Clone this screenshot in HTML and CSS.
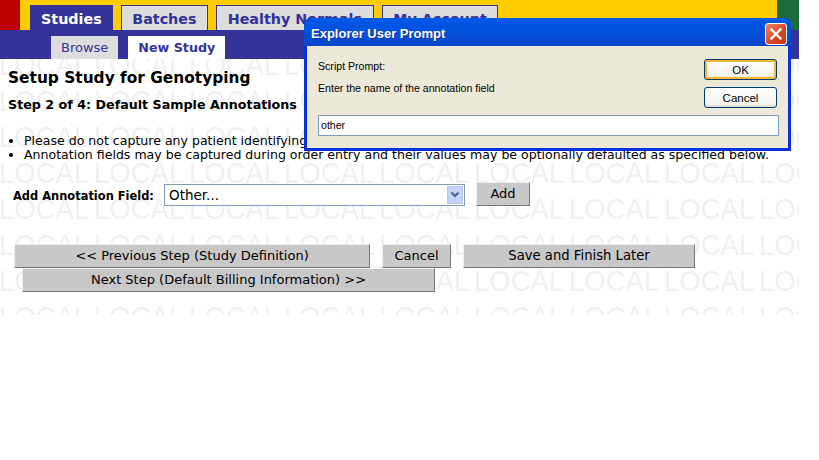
FILE: index.html
```html
<!DOCTYPE html>
<html lang="en">
<head>
    <meta charset="UTF-8">
    <title>Setup Study for Genotyping</title>
    <link rel="stylesheet" href="styles.css">
</head>
<body>
    <div class="page">
        <!-- main tabs -->
        <div class="topBar">
            <div class="redBlock"></div>
            <div class="tabs">
                <a class="tab active">Studies</a>
                <a class="tab">Batches</a>
                <a class="tab">Healthy Normals</a>
                <a class="tab">My Account</a>
            </div>
            <div class="greenBlock"></div>
        </div>
        <div class="subBar">
            <a class="subTab">Browse</a>
            <a class="subTab active">New Study</a>
        </div>

        <div class="content">
            <!-- LOCAL watermark behind the form -->
            <svg class="watermark" width="799" height="256" aria-hidden="true">
                <defs>
                    <pattern id="localTile" width="95" height="36" patternUnits="userSpaceOnUse" x="-1" y="-18">
                        <text x="0" y="34" class="watermarkText" transform="scale(0.95 1)">LOCAL</text>
                    </pattern>
                </defs>
                <rect width="799" height="256" fill="url(#localTile)"></rect>
            </svg>

            <h1>Setup Study for Genotyping</h1>
            <h2>Step 2 of 4: Default Sample Annotations</h2>
            <ul class="notes">
                <li>Please do not capture any patient identifying information in annotation fields.</li>
                <li>Annotation fields may be captured during order entry and their values may be optionally defaulted as specified below.</li>
            </ul>
            <div class="addRow">
                <label class="addLabel">Add Annotation Field:</label>
                <div class="selectBox">
                    <span>Other...</span>
                    <span class="selectArrow">
                        <svg width="12" height="8" viewBox="0 0 12 8"><path d="M2.5 1.5 L6 5 L9.500 1.500" fill="none" stroke="#4d6185" stroke-width="2"></path></svg>
                    </span>
                </div>
                <button class="btn addBtn">Add</button>
            </div>
            <div class="buttonRow">
                <button class="btn prevBtn">&lt;&lt; Previous Step (Study Definition)</button>
                <button class="btn cancelBtn">Cancel</button>
                <button class="btn saveBtn">Save and Finish Later</button>
            </div>
            <div class="buttonRow second">
                <button class="btn nextBtn">Next Step (Default Billing Information) &gt;&gt;</button>
            </div>
        </div>
    </div>

    <!-- prompt window on top of the page -->
    <div class="dialog">
        <div class="dialogTitle">
            <span>Explorer User Prompt</span>
            <span class="closeBtn">
                <svg width="14" height="14" viewBox="0 0 14 14"><path d="M2.500 2.500 L11.500 11.500 M11.500 2.500 L2.500 11.500" stroke="#fff" stroke-width="2.400" stroke-linecap="square"></path></svg>
            </span>
        </div>
        <div class="dialogBody">
            <div class="dialogMain">
                <div class="dialogText">
                    <p>Script Prompt:</p>
                    <p>Enter the name of the annotation field</p>
                </div>
                <div class="dialogButtons">
                    <button class="xpBtn okBtn">OK</button>
                    <button class="xpBtn">Cancel</button>
                </div>
            </div>
            <div class="promptInput">other</div>
        </div>
    </div>
</body>
</html>
```

FILE: styles.css
```css
body {
    margin: 0;
    background-color: #fff;
    font-family: "DejaVu Sans", Verdana, sans-serif;
    color: #000;
}

.page {
    width: 799px;
}

.topBar {
    display: flex;
    height: 30px;
    background-color: #fc0;
}
.redBlock {
    width: 20px;
    background-color: #b00;
}
.greenBlock {
    width: 22px;
    margin-left: auto;
    background-color: #1c6b3c;
}
.tabs {
    display: flex;
    gap: 8px;
    padding: 5px 0 0 10px;
}
.tab {
    height: 25px;
    box-sizing: border-box;
    padding: 0 10.600px;
    border: 1px solid #339;
    border-bottom: none;
    background-color: #ddd;
    color: #339;
    font-size: 14.300px;
    font-weight: bold;
    line-height: 26px;
}
.tab.active {
    padding: 0 10px;
    background-color: #339;
    color: #fff;
}

.subBar {
    display: flex;
    gap: 10px;
    height: 29px;
    box-sizing: border-box;
    padding: 6px 0 0 51px;
    background-color: #339;
}
.subTab {
    padding: 0 10px;
    background-color: #ddd;
    color: #339;
    font-size: 13px;
    line-height: 23px;
}
.subTab.active {
    background-color: #fff;
    font-size: 12.700px;
    font-weight: bold;
}

.content {
    position: relative;
    height: 256px;
    padding-left: 8px;
    box-sizing: border-box;
    overflow: hidden;
}
.content > *:not(.watermark) {
    position: relative;
}
.watermark {
    position: absolute;
    left: 0;
    top: 0;
}
.watermarkText {
    font-family: "Liberation Sans", Arial, sans-serif;
    font-size: 29px;
    fill: #f0f0f0;
}

h1 {
    margin: 0;
    padding-top: 9px;
    font-size: 15.400px;
    line-height: 21px;
}
h2 {
    margin: 0;
    padding-top: 8px;
    font-size: 12.700px;
    line-height: 16px;
}
.notes {
    margin: 0;
    padding: 21px 0 0 16px;
    font-size: 12.550px;
    line-height: 14px;
    white-space: nowrap;
}

.addRow {
    display: flex;
    align-items: flex-start;
    padding: 20px 0 0 5px;
}
.addLabel {
    width: 151px;
    padding-top: 6px;
    font-size: 11.450px;
    font-weight: bold;
    line-height: 16px;
}
.selectBox {
    display: flex;
    justify-content: space-between;
    align-items: center;
    width: 301px;
    height: 22px;
    margin-top: 2px;
    box-sizing: border-box;
    padding: 0 1px 0 4px;
    border: 1px solid #7f9db9;
    background-color: #fff;
    font-size: 13.500px;
}
.selectArrow {
    display: flex;
    justify-content: center;
    align-items: center;
    width: 16px;
    height: 18px;
    border: 1px solid #b5c8ec;
    box-sizing: border-box;
    background-color: #c3d3f8;
}

.btn {
    height: 24px;
    padding: 0;
    border: 1px solid;
    border-color: #eee #777 #777 #eee;
    background-color: #c8c8c8;
    color: #000;
    font-family: inherit;
    font-size: 13px;
    line-height: 20px;
}
.addBtn {
    width: 54px;
    margin-left: 11px;
}
.buttonRow {
    display: flex;
    padding: 38px 0 0 6px;
}
.buttonRow.second {
    padding: 0 0 0 14px;
}
.prevBtn {
    width: 356px;
}
.cancelBtn {
    width: 69px;
    margin-left: 12px;
}
.saveBtn {
    width: 232px;
    margin-left: 12px;
    font-size: 13.200px;
}
.nextBtn {
    width: 413px;
}

.dialog {
    position: absolute;
    left: 304px;
    top: 18px;
    width: 487px;
    height: 133px;
    box-sizing: border-box;
    border: 3px solid #0831d9;
    border-top: none;
    border-radius: 7px 7px 0 0;
    background-color: #0831d9;
    font-family: "Liberation Sans", Tahoma, sans-serif;
    font-size: 10.600px;
}
.dialogTitle {
    display: flex;
    justify-content: space-between;
    align-items: center;
    height: 28px;
    box-sizing: border-box;
    margin: 0 -3px;
    padding: 3px 4px 0 7px;
    border-radius: 7px 7px 0 0;
    background: linear-gradient(#0a5be6, #0054e3 20%, #0450da 60%, #0a46c8);
    color: #fff;
    font-size: 13px;
    font-weight: bold;
    text-shadow: 1px 1px 0 #0f2f9e;
}
.closeBtn {
    display: flex;
    justify-content: center;
    align-items: center;
    width: 20px;
    height: 20px;
    border: 1px solid #fff;
    border-radius: 3px;
    background: linear-gradient(135deg, #e8876a, #d9461f 60%, #c1391a);
}
.dialogBody {
    height: 102px;
    box-sizing: border-box;
    padding: 13px 9px 0 11px;
    background-color: #ece9d8;
}
.dialogMain {
    display: flex;
    justify-content: space-between;
    height: 56px;
}
.dialogText p {
    margin: 0 0 8px;
    line-height: 14px;
}
.dialogButtons {
    display: flex;
    flex-direction: column;
    gap: 7px;
    margin-right: 2px;
}
.xpBtn {
    width: 73px;
    height: 21px;
    padding: 0;
    border: 1px solid #003c74;
    border-radius: 3px;
    background: linear-gradient(#fff, #f4f3ee 85%, #dcd8c8);
    font-family: inherit;
    font-size: 11.500px;
}
.okBtn {
    box-shadow: inset 0 0 0 2px #f8b636;
}
.promptInput {
    height: 21px;
    box-sizing: border-box;
    padding: 0 2px;
    border: 1px solid #7f9db9;
    background-color: #fff;
    line-height: 19px;
}
```
